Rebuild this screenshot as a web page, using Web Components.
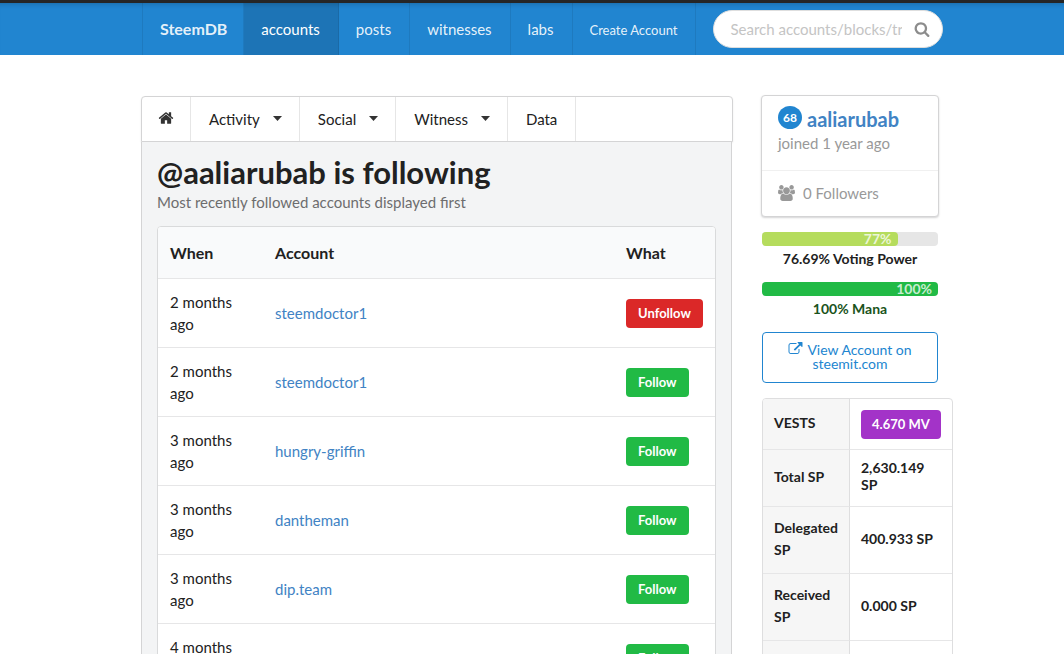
<!DOCTYPE html>
<html lang="en">
<head>
<meta charset="utf-8">
<title>SteemDB - @aaliarubab is following</title>
<style>
  html { scrollbar-width: none; }
  body { margin: 0; background: #fff; color: #212121; font: 15px/22px Lato, "Liberation Sans", sans-serif; }
</style>
</head>
<body>
<steem-app></steem-app>

<template id="t-app">
  <style>
    :host { display: block; }
    .page { box-sizing: border-box; max-width: 814px; margin: 0 auto; padding: 41px 0 0 16px; display: grid; grid-template-columns: minmax(0, 1fr) 178px; gap: 28px; align-items: start; }
    main { min-width: 0; }
    .segment { margin-right: 1px; padding: 13px 15px 15px; background: #f3f4f5; border: 1px solid #d4d4d5; border-top: 0; }
    h1 { margin: 0; font-size: 31px; line-height: 34px; font-weight: 700; }
    h1 + p { margin: 2px 0 13px; color: #6d6d6e; }
    aside { display: grid; grid-template-columns: minmax(0, 1fr); gap: 15px; min-width: 0; }
  </style>
  <site-nav></site-nav>
  <div class="page">
    <main>
      <account-menu></account-menu>
      <div class="segment">
        <h1>@aaliarubab is following</h1>
        <p>Most recently followed accounts displayed first</p>
        <follow-table></follow-table>
      </div>
    </main>
    <aside>
      <account-card level="68" followers="0"><a slot="name" href="#">aaliarubab</a>joined 1 year ago</account-card>
      <progress-bar value="77" color="#b5dc5d">76.69% Voting Power</progress-bar>
      <progress-bar value="100" color="#21ba45" text="#1a531b">100% Mana</progress-bar>
      <external-button>View Account on steemit.com</external-button>
      <stats-table></stats-table>
    </aside>
  </div>
</template>

<template id="t-nav">
  <style>
    :host { display: block; background: #2185d0; border-top: 3px solid #262626; box-shadow: inset 0 5px 5px -4px rgba(0,0,0,.2); }
    nav { box-sizing: border-box; max-width: 822px; height: 52px; margin: 0 auto; padding-left: 21px; display: flex; align-items: stretch; }
    .links { display: flex; border-left: 1px solid rgba(0,0,0,.08); }
    a { display: flex; align-items: center; padding: 0 18px 0 17px; color: rgba(255,255,255,.9); text-decoration: none; border-right: 1px solid rgba(0,0,0,.08); white-space: nowrap; }
    a.brand { padding: 0 16px 0 17px; font-size: 16px; font-weight: 700; }
    a.active { background: rgba(0,0,0,.12); color: #fff; }
    a.small { font-size: 13px; padding-top: 2px; }
    label { flex: 1; margin: 7px 0 7px 17px; padding: 0 12px 0 16px; display: flex; align-items: center; gap: 12px; min-width: 0; background: #fff; border: 1px solid #dedede; border-radius: 20px; box-sizing: border-box; }
    input { flex: 1; min-width: 0; width: 0; padding: 0; border: 0; outline: 0; background: none; font: inherit; color: #212121; }
    input::placeholder { color: #c4c4c4; opacity: 1; }
    svg { width: 16px; height: 16px; fill: #8c8c8c; flex: none; }
  </style>
  <nav>
    <div class="links">
      <a class="brand" href="#">SteemDB</a>
      <a class="active" href="#">accounts</a>
      <a href="#">posts</a>
      <a href="#">witnesses</a>
      <a href="#">labs</a>
      <a class="small" href="#">Create Account</a>
    </div>
    <label>
      <input type="text" aria-label="Search" placeholder="Search accounts/blocks/transactions">
      <svg viewBox="0 0 1792 1792" aria-hidden="true"><path d="M1216 832q0-185-131.500-316.500t-316.500-131.500-316.500 131.500-131.500 316.500 131.500 316.500 316.500 131.500 316.500-131.500 131.500-316.500zm512 832q0 52-38 90t-90 38q-54 0-90-38l-343-342q-179 124-399 124-143 0-273.500-55.500t-225-150-150-225-55.500-273.500 55.500-273.500 150-225 225-150 273.500-55.500 273.500 55.500 225 150 150 225 55.500 273.500q0 220-124 399l343 343q37 37 37 90z"/></svg>
    </label>
  </nav>
</template>

<template id="t-menu">
  <style>
    :host { display: block; background: #fff; border: 1px solid #d4d4d5; border-radius: 4px 4px 0 0; box-shadow: 0 1px 2px rgba(34,36,38,.08); }
    nav { display: flex; height: 44px; }
    a { display: flex; align-items: center; padding: 0 18px; color: #212121; text-decoration: none; border-right: 1px solid #e6e6e6; }
    .home { width: 12px; }
    .home svg { width: 16px; height: 16px; margin: -2px 0 0 -2px; flex: none; }
    svg { fill: #333; }
    .caret { width: 9px; height: 5px; margin: -2px -1px 0 13px; }
  </style>
  <nav>
    <a class="home" href="#" aria-label="Home"><svg viewBox="0 0 1792 1792" aria-hidden="true"><path d="M1472 992v480q0 26-19 45t-45 19h-384v-384h-256v384h-384q-26 0-45-19t-19-45v-480q0-1 .5-3t.5-3l575-474 575 474q1 2 1 6zm223-69l-62 74q-8 9-21 11h-3q-13 0-21-7l-692-577-692 577q-12 8-24 7-13-2-21-11l-62-74q-8-10-7-23.500t11-21.500l719-599q32-26 76-26t76 26l244 204v-195q0-14 9-23t23-9h192q14 0 23 9t9 23v408l219 182q10 8 11 21.500t-7 23.500z"/></svg></a>
    <a href="#">Activity <svg class="caret" viewBox="0 0 9 5" aria-hidden="true"><path d="M0 0h9L4.500 5z"/></svg></a>
    <a href="#">Social <svg class="caret" viewBox="0 0 9 5" aria-hidden="true"><path d="M0 0h9L4.500 5z"/></svg></a>
    <a href="#">Witness <svg class="caret" viewBox="0 0 9 5" aria-hidden="true"><path d="M0 0h9L4.500 5z"/></svg></a>
    <a href="#">Data</a>
  </nav>
</template>

<template id="t-follow">
  <style>
    :host { display: block; background: #fff; border: 1px solid #d9dadb; border-radius: 4px; overflow: hidden; }
    table { width: 100%; border-collapse: separate; border-spacing: 0; table-layout: fixed; }
    th, td { padding: 12px; text-align: left; vertical-align: middle; }
    th { height: 27px; background: #f9fafb; font-size: 16px; font-weight: 700; }
    td { height: 44px; border-top: 1px solid #e6e6e7; }
    .when { width: 81px; }
    .what { width: 77px; }
    a { color: #4183c4; text-decoration: none; }
    button { display: block; height: 29px; padding: 0 12px; border: 0; border-radius: 4px; color: #fff; background: #21ba45; font: 700 13px/29px Lato, sans-serif; }
    button.red { background: #db2828; }
  </style>
  <table>
    <thead><tr><th class="when">When</th><th>Account</th><th class="what">What</th></tr></thead>
    <tbody></tbody>
  </table>
</template>

<template id="t-card">
  <style>
    :host { display: block; border: 1px solid #d4d4d5; border-radius: 4px; box-shadow: 0 1px 2px #d4d4d5; color: #999; background: #fff; margin-top: -1px; }
    .top { padding: 10px 16px; border-bottom: 1px solid #f0f0f0; height: 54px; }
    .head { display: flex; align-items: center; gap: 5px; height: 26px; }
    .badge { width: 24px; height: 23px; margin-bottom: 3px; border-radius: 50%; background: #2185d0; color: #fff; font: 700 12px/23px Lato, sans-serif; text-align: center; }
    ::slotted(a) { color: #4183c4; font-size: 20px; font-weight: 700; line-height: 26px; text-decoration: none; }
    .bottom { display: flex; align-items: center; gap: 8px; padding: 11px 16px 12px; }
    svg { width: 17px; height: 16px; fill: #999; }
  </style>
  <div class="top">
    <div class="head"><span class="badge"></span><slot name="name"></slot></div>
    <slot></slot>
  </div>
  <div class="bottom">
    <svg viewBox="0 0 1920 1792" aria-hidden="true"><path d="M593 896q-162 5-265 128h-134q-82 0-138-40.500t-56-118.500q0-353 124-353 6 0 43.500 21t97.500 42.500 119 21.500q67 0 133-23-5 37-5 66 0 139 81 256zm1071 637q0 120-73 189.500t-194 69.500h-874q-121 0-194-69.500t-73-189.500q0-53 3.500-103.500t14-109 26.500-108.500 43-97.500 62-81 85.500-53.500 111.500-20q10 0 43 21.500t73 48 107 48 135 21.500 135-21.500 107-48 73-48 43-21.500q61 0 111.500 20t85.500 53.500 62 81 43 97.500 26.500 108.500 14 109 3.500 103.500zm-1024-1277q0 106-75 181t-181 75-181-75-75-181 75-181 181-75 181 75 75 181zm704 384q0 159-112.500 271.500t-271.500 112.500-271.500-112.500-112.500-271.500 112.500-271.500 271.500-112.500 271.500 112.500 112.500 271.500zm576 225q0 78-56 118.500t-138 40.500h-134q-103-123-265-128 81-117 81-256 0-29-5-66 66 23 133 23 59 0 119-21.500t97.500-42.500 43.500-21q124 0 124 353zm-128-609q0 106-75 181t-181 75-181-75-75-181 75-181 181-75 181 75 75 181z"/></svg>
    <span class="followers"></span>
  </div>
</template>

<template id="t-progress">
  <style>
    :host { display: block; margin: 0 1px; }
    .track { height: 14px; border-radius: 4px; background: #e6e6e6; }
    .bar { box-sizing: border-box; height: 14px; padding-right: 6px; border-radius: 4px; color: rgba(255,255,255,.75); font-size: 14px; line-height: 14px; font-weight: 700; text-align: right; }
    .label { height: 21px; font-size: 14px; line-height: 25px; font-weight: 700; text-align: center; white-space: nowrap; }
  </style>
  <div class="track" role="progressbar"><div class="bar"></div></div>
  <div class="label"><slot></slot></div>
</template>

<template id="t-external">
  <style>
    :host { display: block; margin: 0 1px; }
    a { display: block; padding: 9px 22px 11px; border: 1px solid #2185d0; border-radius: 4px; color: #2185d0; font-size: 14px; line-height: 14px; text-align: center; text-decoration: none; }
    svg { width: 15px; height: 14px; margin-right: 4px; fill: #2185d0; vertical-align: -1px; }
  </style>
  <a href="#"><svg viewBox="0 0 1792 1792" aria-hidden="true"><path d="M1408 928v320q0 119-84.500 203.500t-203.500 84.500h-832q-119 0-203.500-84.500t-84.500-203.500v-832q0-119 84.500-203.500t203.500-84.500h704q14 0 23 9t9 23v64q0 14-9 23t-23 9h-704q-66 0-113 47t-47 113v832q0 66 47 113t113 47h832q66 0 113-47t47-113v-320q0-14 9-23t23-9h64q14 0 23 9t9 23zm384-864v512q0 26-19 45t-45 19-45-19l-176-176-652 652q-10 10-23 10t-23-10l-114-114q-10-10-10-23t10-23l652-652-176-176q-19-19-19-45t19-45 45-19h512q26 0 45 19t19 45z"/></svg><slot></slot></a>
</template>

<template id="t-stats">
  <style>
    :host { display: block; width: 189px; margin-left: 1px; border: 1px solid #dededf; border-radius: 4px; overflow: hidden; font-size: 14px; font-weight: 700; }
    table { width: 100%; border-collapse: separate; border-spacing: 0; table-layout: fixed; }
    th, td { box-sizing: border-box; padding: 10px 11px 12px; text-align: left; font-weight: 700; border-bottom: 1px solid #e6e6e7; }
    th { width: 87px; background: #f6f6f6; border-right: 1px solid #dededf; }
    td { padding: 9px 11px 13px; line-height: 17px; }
    tr:first-child > * { height: 51px; }
    tr:first-child td { padding: 11px 11px 10px; }
    tr:nth-child(2) > * { height: 57px; }
    .chip { display: block; padding: 0 11px; height: 29px; border-radius: 4px; background: #a333c8; color: #fff; font-size: 13px; line-height: 29px; white-space: nowrap; }
  </style>
  <table><tbody>
    <tr><th scope="row">VESTS</th><td><span class="chip">4.670 MV</span></td></tr>
    <tr><th scope="row">Total SP</th><td>2,630.149 SP</td></tr>
    <tr><th scope="row">Delegated SP</th><td>400.933 SP</td></tr>
    <tr><th scope="row">Received SP</th><td>0.000 SP</td></tr>
    <tr><th scope="row">&nbsp;</th><td></td></tr>
  </tbody></table>
</template>

<script>
  class TemplateElement extends HTMLElement {
    constructor() {
      super();
      const template = document.getElementById(this.constructor.template);
      this.attachShadow({ mode: "open" }).append(template.content.cloneNode(true));
    }
    $(selector) { return this.shadowRoot.querySelector(selector); }
  }

  class SiteNav extends TemplateElement { static template = "t-nav"; }
  class AccountMenu extends TemplateElement { static template = "t-menu"; }
  class ExternalButton extends TemplateElement { static template = "t-external"; }
  class StatsTable extends TemplateElement { static template = "t-stats"; }
  class SteemApp extends TemplateElement { static template = "t-app"; }

  class FollowTable extends TemplateElement {
    static template = "t-follow";
    connectedCallback() {
      const rows = [
        ["2 months ago", "steemdoctor1", "Unfollow"],
        ["2 months ago", "steemdoctor1", "Follow"],
        ["3 months ago", "hungry-griffin", "Follow"],
        ["3 months ago", "dantheman", "Follow"],
        ["3 months ago", "dip.team", "Follow"],
        ["4 months ago", "", "Follow"]
      ];
      this.$("tbody").innerHTML = rows.map(([when, account, what]) =>
        `<tr><td>${when}</td><td>${account ? `<a href="#">${account}</a>` : ""}</td>` +
        `<td><button type="button"${what === "Unfollow" ? ' class="red"' : ""}>${what}</button></td></tr>`).join("");
    }
  }

  class AccountCard extends TemplateElement {
    static template = "t-card";
    connectedCallback() {
      this.$(".badge").textContent = this.getAttribute("level");
      this.$(".followers").textContent = this.getAttribute("followers") + " Followers";
    }
  }

  class ProgressBar extends TemplateElement {
    static template = "t-progress";
    connectedCallback() {
      const value = this.getAttribute("value");
      const bar = this.$(".bar");
      bar.textContent = value + "%";
      bar.style.width = value + "%";
      bar.style.background = this.getAttribute("color");
      this.$(".label").style.color = this.getAttribute("text") || "";
      const track = this.$(".track");
      track.setAttribute("aria-valuenow", value);
      track.setAttribute("aria-label", this.textContent);
    }
  }

  customElements.define("site-nav", SiteNav);
  customElements.define("account-menu", AccountMenu);
  customElements.define("follow-table", FollowTable);
  customElements.define("account-card", AccountCard);
  customElements.define("progress-bar", ProgressBar);
  customElements.define("external-button", ExternalButton);
  customElements.define("stats-table", StatsTable);
  customElements.define("steem-app", SteemApp);
</script>
</body>
</html>
